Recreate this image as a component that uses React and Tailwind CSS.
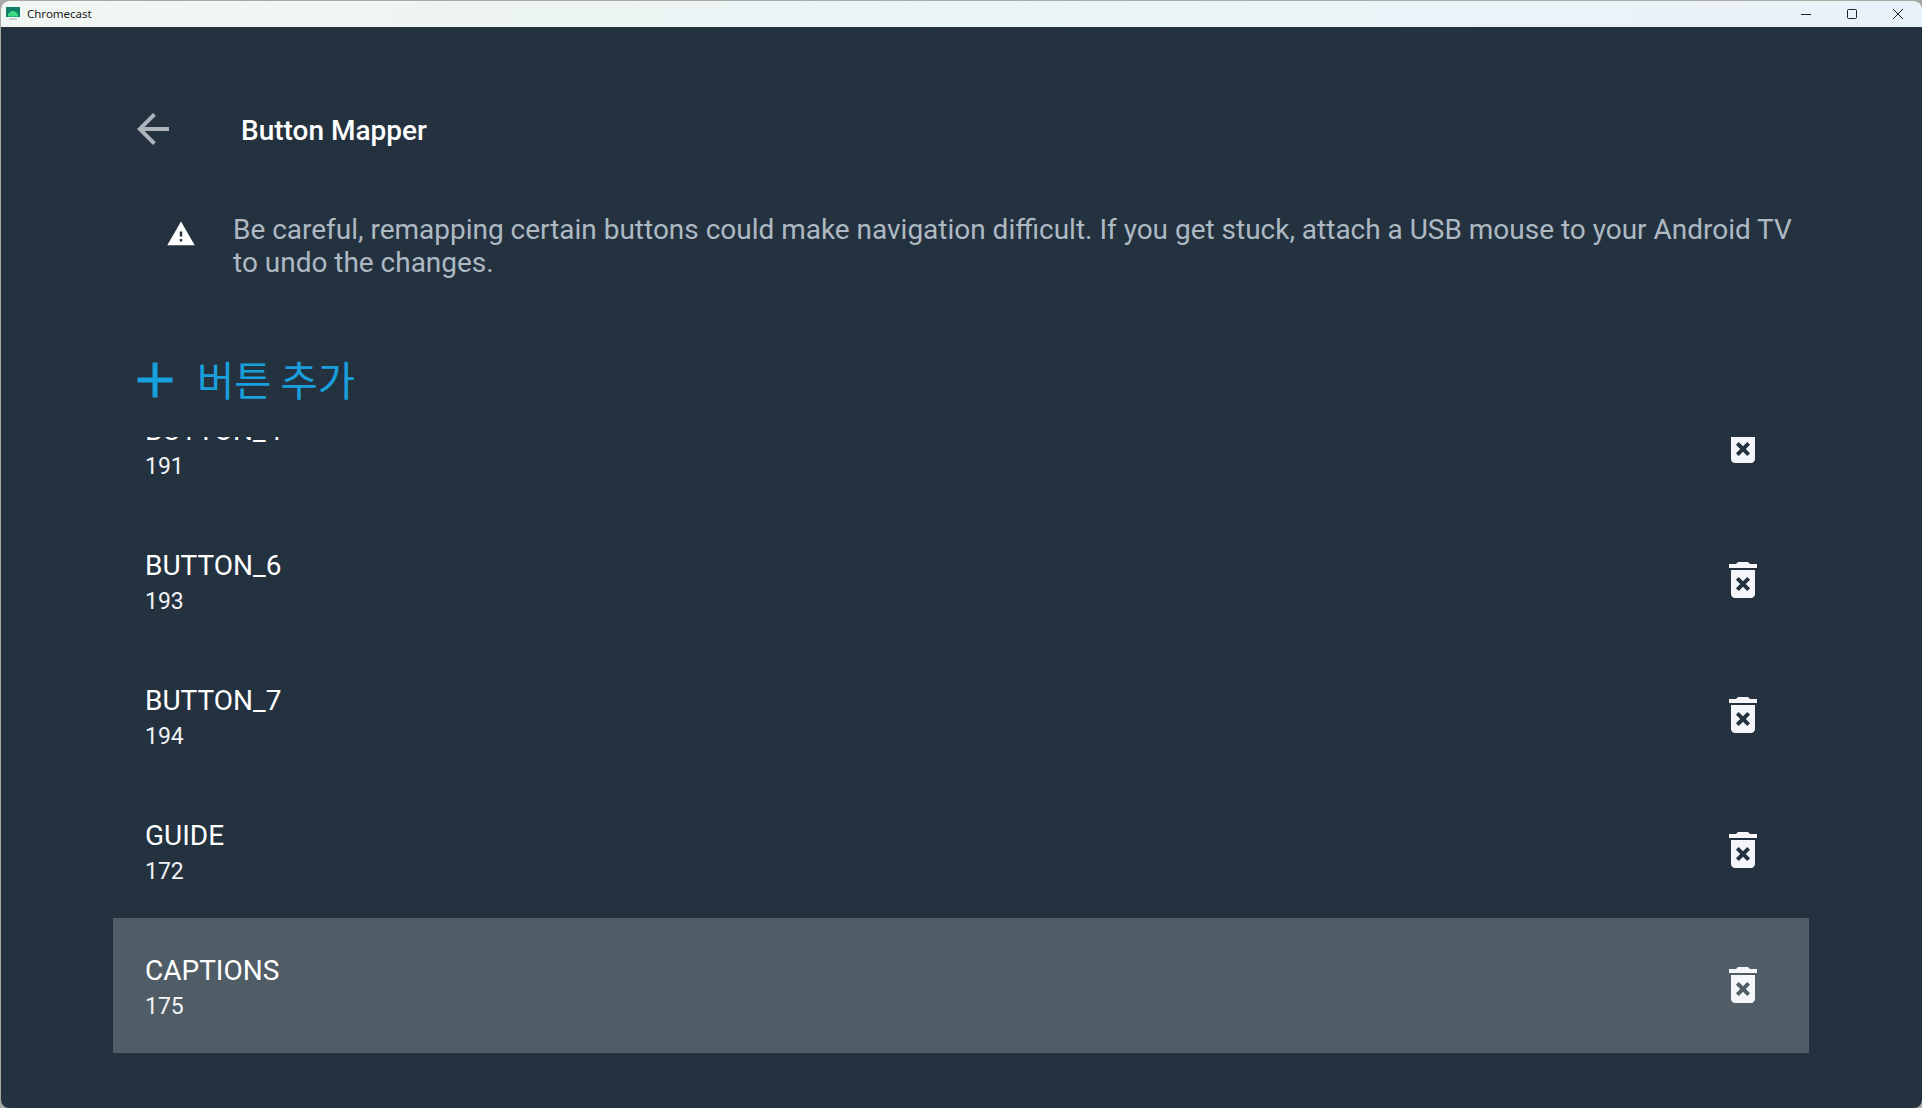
const rows = [
  { name: "BUTTON_4", code: "191" },
  { name: "BUTTON_6", code: "193" },
  { name: "BUTTON_7", code: "194" },
  { name: "GUIDE", code: "172" },
  { name: "CAPTIONS", code: "175", active: true },
];

function TrashIcon({ className }) {
  return (
    <svg viewBox="0 0 24 24" className={className} fill="currentColor">
      <path d="M15.5 4l-1-1h-5l-1 1H5v2h14V4zM6 19c0 1.1.9 2 2 2h8c1.1 0 2-.9 2-2V7H6v12zm2.46-7.12l1.41-1.41L12 12.59l2.12-2.12 1.41 1.41L13.41 14l2.12 2.12-1.41 1.41L12 15.41l-2.12 2.12-1.41-1.41L10.59 14l-2.13-2.12z" />
    </svg>
  );
}

function TitleBar() {
  return (
    <div className="h-[26px] shrink-0 flex items-center justify-between bg-gradient-to-r from-[#f0f6f2] via-[#ebf4f6] to-[#eaf2f9] font-['Noto_Sans',sans-serif] text-[11.5px] text-[#1a1a1a]">
      <div className="flex items-center pl-[5px] gap-[7px]">
        <svg viewBox="0 0 14 14" className="w-[14px] h-[14px]">
          <rect x="0" y="0" width="14" height="10" fill="#0f7f68" />
          <path d="M2 9a5 5 0 0 1 10 0z" fill="#3ddc84" />
          <rect x="2" y="7" width="10" height="2.5" fill="#3ddc84" />
          <rect x="3" y="11" width="8" height="2" fill="#c9cdcd" />
        </svg>
        <span>Chromecast</span>
      </div>
      <div className="flex items-center text-[#222]">
        <svg viewBox="0 0 12 12" className="w-[12px] h-[12px] mr-[34px]">
          <path d="M1 6.5h10" stroke="currentColor" strokeWidth="1" />
        </svg>
        <svg viewBox="0 0 12 12" className="w-[12px] h-[12px] mr-[34px]">
          <rect x="1.5" y="1.5" width="9" height="9" rx="1" fill="none" stroke="currentColor" strokeWidth="1" />
        </svg>
        <svg viewBox="0 0 12 12" className="w-[12px] h-[12px] mr-[18px]">
          <path d="M1 1l10 10M11 1L1 11" stroke="currentColor" strokeWidth="1" />
        </svg>
      </div>
    </div>
  );
}

export default function App() {
  return (
    <div className="h-[1108px] w-full overflow-hidden bg-[#a9a9a4] pt-px pl-px">
      <div className="h-full flex flex-col overflow-hidden rounded-t-lg rounded-b-lg bg-[#243240] font-['Roboto',sans-serif]">
        <TitleBar />

        {/* Header */}
        <div className="flex items-center pl-[128px] pt-[78px] shrink-0">
          <svg viewBox="0 0 24 24" className="w-12 h-12 text-[#aeb5ba]" fill="currentColor">
            <path d="M20 11H7.83l5.59-5.59L12 4l-8 8 8 8 1.41-1.41L7.83 13H20v-2z" />
          </svg>
          <h1 className="ml-[64px] h-12 text-[28px] font-medium leading-[52px] text-white">Button Mapper</h1>
        </div>

        {/* Warning */}
        <div className="flex pl-[165px] pr-[118px] pt-[60px] shrink-0">
          <svg viewBox="0 0 24 24" className="w-[30px] h-[30px] mt-[6px] shrink-0 text-white" fill="currentColor">
            <path d="M1 21h22L12 2 1 21zm12-3h-2v-2h2v2zm0-4h-2v-4h2v4z" />
          </svg>
          <p className="ml-[37px] text-[27.97px] leading-[33px] text-[#aeb9c3]">
            Be careful, remapping certain buttons could make navigation difficult. If you get stuck, attach a USB mouse to your Android TV to undo the changes.
          </p>
        </div>

        {/* Add button */}
        <div className="flex items-start pl-[124px] pt-[71px] h-[158px] shrink-0 text-[#18a0dc]">
          <svg viewBox="0 0 24 24" className="w-[60px] h-[60px]" fill="currentColor">
            <path d="M19 13h-6v6h-2v-6H5v-2h6V5h2v6h6v2z" />
          </svg>
          <span className="ml-[12px] -mt-[1px] text-[40.5px] leading-[60px] font-['Noto_Sans_CJK_KR',sans-serif]">버튼 추가</span>
        </div>

        {/* List */}
        <div className="flex-1 overflow-hidden pl-[112px] pr-[113px]">
          <div className="-mt-[59px]">
            {rows.map((row) => (
              <div
                key={row.name}
                className={`h-[135px] flex items-center justify-between pl-[32px] pr-[42px] text-white ${row.active ? "bg-[#505d66]" : ""}`}
              >
                <div className="pt-[6px]">
                  <div className="text-[28px] leading-[35px]">{row.name}</div>
                  <div className="mt-px text-[23px] leading-[36px] text-[#f1f3f5]">{row.code}</div>
                </div>
                <TrashIcon className="w-12 h-12 mb-[2px] text-[#f4f6f9]" />
              </div>
            ))}
          </div>
        </div>
      </div>
    </div>
  );
}
